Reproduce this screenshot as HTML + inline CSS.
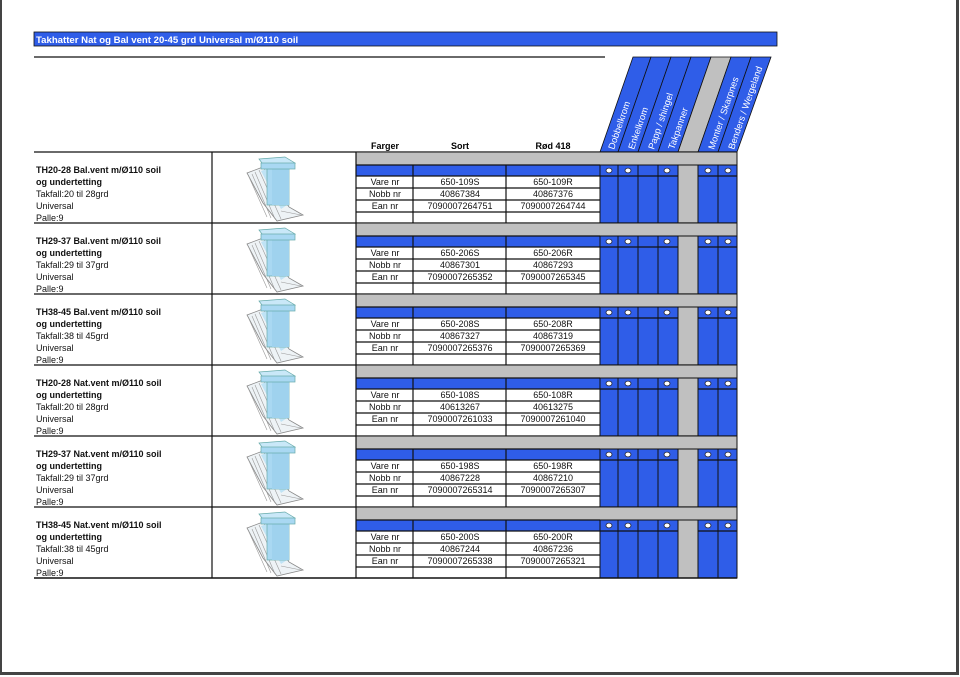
<!DOCTYPE html>
<html><head><meta charset="utf-8"><style>
html,body{margin:0;padding:0;background:#fff}
body{width:960px;height:677px;overflow:hidden;position:relative}
.frame{position:absolute;left:0;top:-2px;width:954px;height:674px;border-left:2px solid #444;border-right:3px solid #444;border-bottom:3px solid #444}
svg{position:absolute;left:0;top:0;font-family:"Liberation Sans",Arial,sans-serif}
.b{font-weight:bold}
</style></head><body>
<div class="frame"></div>
<svg width="960" height="677" viewBox="0 0 960 677">
<defs>
<g id="blk">
 <rect x="356" y="1" width="381" height="12" fill="#c0c0c0"/>
 <rect x="356" y="13" width="244" height="11" fill="#2f5de8"/>
 <rect x="356" y="24" width="244" height="47" fill="#fff"/>
 <g fill="#2f5de8" stroke="#111" stroke-width="1">
  <rect x="600" y="13" width="18" height="58"/><rect x="618" y="13" width="20" height="58"/>
  <rect x="638" y="13" width="20" height="58"/><rect x="658" y="13" width="20" height="58"/>
  <rect x="698" y="13" width="20" height="58"/><rect x="718" y="13" width="19" height="58"/>
 </g>
 <rect x="678" y="13" width="20" height="58" fill="#c0c0c0" stroke="#111"/>
 <g stroke="#111" stroke-width="1.2">
  <line x1="600" y1="24" x2="678" y2="24"/><line x1="698" y1="24" x2="737" y2="24"/>
  <line x1="356" y1="13" x2="600" y2="13"/>
  <line x1="356" y1="24" x2="600" y2="24"/><line x1="356" y1="36" x2="600" y2="36"/>
  <line x1="356" y1="48" x2="600" y2="48"/><line x1="356" y1="60" x2="600" y2="60"/>
  <line x1="413" y1="13" x2="413" y2="71"/><line x1="506" y1="13" x2="506" y2="71"/>
 </g>
 <g fill="#fff" stroke="#223" stroke-width="0.8">
  <ellipse cx="609" cy="18.5" rx="3" ry="2.4"/><ellipse cx="628" cy="18.5" rx="3" ry="2.4"/>
  <ellipse cx="667" cy="18.5" rx="3" ry="2.4"/><ellipse cx="708" cy="18.5" rx="3" ry="2.4"/>
  <ellipse cx="728" cy="18.5" rx="3" ry="2.4"/>
 </g>
 <g transform="translate(245,3)">
  <path d="M2 18 L18 12 L44 52 L58 60 L32 66 L18 48 Z" fill="#eef3f6" stroke="#888" stroke-width="0.8"/>
  <g stroke="#999" stroke-width="0.6"><line x1="4" y1="22" x2="22" y2="62"/><line x1="7" y1="19" x2="26" y2="63"/><line x1="10" y1="17" x2="30" y2="64"/><line x1="14" y1="15" x2="36" y2="64"/><line x1="36" y1="56" x2="56" y2="60"/></g>
  <path d="M16 16 L24 13 L42 50 L36 54 Z" fill="#bfe3f5"/>
  <rect x="22" y="12" width="22" height="38" fill="#a9d8f2" stroke="#6aa" stroke-width="0.7"/>
  <rect x="27" y="12" width="17" height="38" fill="#9fd2ee"/>
  <path d="M14 4 L40 2 L50 8 L20 12 Z" fill="#c9e8f8" stroke="#6aa" stroke-width="0.7"/>
  <rect x="16" y="8" width="34" height="6" fill="#a9d8f2" stroke="#6aa" stroke-width="0.7"/>
 </g>
 <line x1="34" y1="0" x2="356" y2="0" stroke="#111" stroke-width="1.3"/>
 <line x1="212" y1="0" x2="212" y2="71" stroke="#111" stroke-width="1.2"/>
 <line x1="356" y1="0" x2="356" y2="71" stroke="#111" stroke-width="1.2"/>
 <line x1="356" y1="0" x2="737" y2="0" stroke="#111" stroke-width="1.2"/>
 <line x1="737" y1="0" x2="737" y2="71" stroke="#111" stroke-width="1"/>
</g>
</defs>

<rect x="34" y="32" width="743" height="14" fill="#2f5de8" stroke="#111" stroke-width="0.8"/>
<text x="36" y="43" class="b" font-size="9.6" fill="#fff">Takhatter Nat og Bal vent 20-45 grd Universal m/Ø110 soil</text>
<line x1="34" y1="57" x2="605" y2="57" stroke="#111" stroke-width="1.3"/>

<g stroke="#111" stroke-width="0.8">
 <polygon points="600,152 618,152 651,57 633,57" fill="#2f5de8"/>
 <polygon points="618,152 638,152 671,57 651,57" fill="#2f5de8"/>
 <polygon points="638,152 658,152 691,57 671,57" fill="#2f5de8"/>
 <polygon points="658,152 678,152 711,57 691,57" fill="#2f5de8"/>
 <polygon points="678,152 698,152 731,57 711,57" fill="#c0c0c0"/>
 <polygon points="698,152 718,152 751,57 731,57" fill="#2f5de8"/>
 <polygon points="718,152 737,152 771,57 751,57" fill="#2f5de8"/>
</g>
<g font-size="9.3" fill="#fff">
 <text transform="translate(614,150) rotate(-71)">Dobbelkrom</text>
 <text transform="translate(634,150) rotate(-71)">Enkelkrom</text>
 <text transform="translate(654,150) rotate(-71)">Papp / shingel</text>
 <text transform="translate(674,150) rotate(-71)">Takpanner</text>
 <text transform="translate(714,150) rotate(-71)">Monter / Skarpnes</text>
 <text transform="translate(734,150) rotate(-71)">Benders / Wergeland</text>
</g>

<g class="b" font-size="9" text-anchor="middle">
 <text x="385" y="149">Farger</text><text x="460" y="149">Sort</text><text x="553" y="149">Rød 418</text>
</g>

<use href="#blk" y="152"/><use href="#blk" y="223"/><use href="#blk" y="294"/>
<use href="#blk" y="365"/><use href="#blk" y="436"/><use href="#blk" y="507"/>
<line x1="34" y1="578" x2="737" y2="578" stroke="#111" stroke-width="1.5"/>

<g font-size="9" fill="#111">
<g transform="translate(0,152)">
 <text x="36" y="21" class="b">TH20-28 Bal.vent m/Ø110 soil</text><text x="36" y="33" class="b">og undertetting</text>
 <text x="36" y="45">Takfall:20 til 28grd</text><text x="36" y="57">Universal</text><text x="36" y="69">Palle:9</text>
 <g text-anchor="middle"><text x="385" y="33">Vare nr</text><text x="385" y="45">Nobb nr</text><text x="385" y="57">Ean nr</text>
 <text x="460" y="33">650-109S</text><text x="460" y="45">40867384</text><text x="460" y="57">7090007264751</text>
 <text x="553" y="33">650-109R</text><text x="553" y="45">40867376</text><text x="553" y="57">7090007264744</text></g>
</g>
<g transform="translate(0,223)">
 <text x="36" y="21" class="b">TH29-37 Bal.vent m/Ø110 soil</text><text x="36" y="33" class="b">og undertetting</text>
 <text x="36" y="45">Takfall:29 til 37grd</text><text x="36" y="57">Universal</text><text x="36" y="69">Palle:9</text>
 <g text-anchor="middle"><text x="385" y="33">Vare nr</text><text x="385" y="45">Nobb nr</text><text x="385" y="57">Ean nr</text>
 <text x="460" y="33">650-206S</text><text x="460" y="45">40867301</text><text x="460" y="57">7090007265352</text>
 <text x="553" y="33">650-206R</text><text x="553" y="45">40867293</text><text x="553" y="57">7090007265345</text></g>
</g>
<g transform="translate(0,294)">
 <text x="36" y="21" class="b">TH38-45 Bal.vent m/Ø110 soil</text><text x="36" y="33" class="b">og undertetting</text>
 <text x="36" y="45">Takfall:38 til 45grd</text><text x="36" y="57">Universal</text><text x="36" y="69">Palle:9</text>
 <g text-anchor="middle"><text x="385" y="33">Vare nr</text><text x="385" y="45">Nobb nr</text><text x="385" y="57">Ean nr</text>
 <text x="460" y="33">650-208S</text><text x="460" y="45">40867327</text><text x="460" y="57">7090007265376</text>
 <text x="553" y="33">650-208R</text><text x="553" y="45">40867319</text><text x="553" y="57">7090007265369</text></g>
</g>
<g transform="translate(0,365)">
 <text x="36" y="21" class="b">TH20-28 Nat.vent m/Ø110 soil</text><text x="36" y="33" class="b">og undertetting</text>
 <text x="36" y="45">Takfall:20 til 28grd</text><text x="36" y="57">Universal</text><text x="36" y="69">Palle:9</text>
 <g text-anchor="middle"><text x="385" y="33">Vare nr</text><text x="385" y="45">Nobb nr</text><text x="385" y="57">Ean nr</text>
 <text x="460" y="33">650-108S</text><text x="460" y="45">40613267</text><text x="460" y="57">7090007261033</text>
 <text x="553" y="33">650-108R</text><text x="553" y="45">40613275</text><text x="553" y="57">7090007261040</text></g>
</g>
<g transform="translate(0,436)">
 <text x="36" y="21" class="b">TH29-37 Nat.vent m/Ø110 soil</text><text x="36" y="33" class="b">og undertetting</text>
 <text x="36" y="45">Takfall:29 til 37grd</text><text x="36" y="57">Universal</text><text x="36" y="69">Palle:9</text>
 <g text-anchor="middle"><text x="385" y="33">Vare nr</text><text x="385" y="45">Nobb nr</text><text x="385" y="57">Ean nr</text>
 <text x="460" y="33">650-198S</text><text x="460" y="45">40867228</text><text x="460" y="57">7090007265314</text>
 <text x="553" y="33">650-198R</text><text x="553" y="45">40867210</text><text x="553" y="57">7090007265307</text></g>
</g>
<g transform="translate(0,507)">
 <text x="36" y="21" class="b">TH38-45 Nat.vent m/Ø110 soil</text><text x="36" y="33" class="b">og undertetting</text>
 <text x="36" y="45">Takfall:38 til 45grd</text><text x="36" y="57">Universal</text><text x="36" y="69">Palle:9</text>
 <g text-anchor="middle"><text x="385" y="33">Vare nr</text><text x="385" y="45">Nobb nr</text><text x="385" y="57">Ean nr</text>
 <text x="460" y="33">650-200S</text><text x="460" y="45">40867244</text><text x="460" y="57">7090007265338</text>
 <text x="553" y="33">650-200R</text><text x="553" y="45">40867236</text><text x="553" y="57">7090007265321</text></g>
</g>
</g>
</svg>
</body></html>
